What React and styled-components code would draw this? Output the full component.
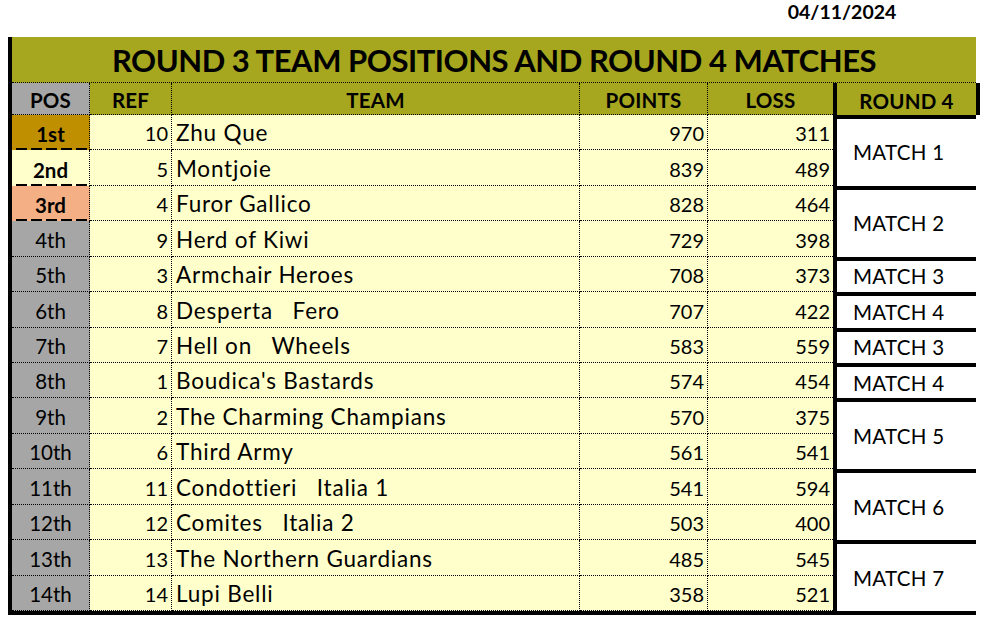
import React from 'react';
import styled, { createGlobalStyle, css } from 'styled-components';

const Global = createGlobalStyle`
  html, body { margin: 0; padding: 0; background: #ffffff; }
  body { font-family: Lato, "Liberation Sans", sans-serif; color: #000; }
  * { box-sizing: border-box; }
`;

const COLS = '78px 82px 408px 128px 125px 143px';
const OLIVE = '#a6a61f';
const GRAY = '#a6a6a6';
const CREAM = '#ffffcc';

const Page = styled.div`
  padding-left: 8px;
  width: 987px;
`;

const DateBar = styled.div`
  display: grid;
  grid-template-columns: ${COLS};
  margin-left: 4px;
  width: 964px;
  height: 37px;
`;

const DateText = styled.div`
  grid-column: 5 / span 2;
  text-align: center;
  font-weight: 700;
  font-size: 19.5px;
  line-height: 24px;
`;

const Sheet = styled.div`
  width: 968px;
  border-left: 4px solid #000;
  border-bottom: 4px solid #000;
`;

const Title = styled.div`
  height: 46px;
  background: ${OLIVE};
  border-bottom: 1px dotted #000;
  display: flex;
  align-items: center;
  justify-content: center;
  font-weight: 700;
  font-size: 31px;
  letter-spacing: -0.45px;
  white-space: nowrap;
`;

const Grid = styled.div`
  display: grid;
  grid-template-columns: ${COLS};
  grid-template-rows: 32px repeat(14, 1fr);
  height: 528px;
`;

const dashLine = css`
  background-image: repeating-linear-gradient(
    90deg,
    #000 0 11px,
    transparent 11px 15px
  );
  background-size: 100% 2px;
  background-position: 4px 100%;
  background-repeat: no-repeat;
`;

const kinds = {
  pos: css`
    font-size: 20.5px;
    justify-content: center;
  `,
  num: css`
    font-size: 20px;
    justify-content: flex-end;
    padding-right: 3px;
  `,
  name: css`
    font-size: 22.5px;
    letter-spacing: 0.8px;
    justify-content: flex-start;
    padding-left: 4px;
    padding-bottom: 3px;
  `,
};

const Cell = styled.div`
  background-color: ${p => p.$bg || CREAM};
  border-bottom: ${p => (p.$dash ? 'none' : '1px dotted #000')};
  border-right: ${p => (p.$last ? 'none' : '1px dotted #000')};
  font-weight: ${p => (p.$bold ? 700 : 400)};
  display: flex;
  align-items: flex-end;
  padding-bottom: 4px;
  line-height: normal;
  white-space: pre;
  ${p => kinds[p.$kind]}
  ${p => p.$dash && dashLine}
`;

const HeadCell = styled.div`
  background-color: ${p => p.$bg || OLIVE};
  border-bottom: 1px dotted #000;
  border-right: ${p => (p.$last ? 'none' : '1px dotted #000')};
  font-size: 20.5px;
  letter-spacing: 0.2px;
  font-weight: 700;
  display: flex;
  align-items: flex-end;
  justify-content: center;
  padding-bottom: 2px;
`;

const RoundHead = styled(HeadCell)`
  border-left: 4px solid #000;
  border-right: 4px solid #000;
  margin-right: -4px;
  border-bottom: none;
`;

const MatchCell = styled.div`
  grid-column: 6;
  grid-row: ${p => p.$row + 1} / span ${p => p.$span};
  background: #ffffff;
  border-left: 4px solid #000;
  border-top: 4px solid #000;
  display: flex;
  align-items: center;
  padding-left: 16px;
  font-size: 20.5px;
  letter-spacing: 0.3px;
  font-weight: 400;
`;

const teams = [
  ['1st', 10, 'Zhu Que', 970, 311],
  ['2nd', 5, 'Montjoie', 839, 489],
  ['3rd', 4, 'Furor Gallico', 828, 464],
  ['4th', 9, 'Herd of Kiwi', 729, 398],
  ['5th', 3, 'Armchair Heroes', 708, 373],
  ['6th', 8, 'Desperta   Fero', 707, 422],
  ['7th', 7, 'Hell on   Wheels', 583, 559],
  ['8th', 1, "Boudica's Bastards", 574, 454],
  ['9th', 2, 'The Charming Champians', 570, 375],
  ['10th', 6, 'Third Army', 561, 541],
  ['11th', 11, 'Condottieri   Italia 1', 541, 594],
  ['12th', 12, 'Comites   Italia 2', 503, 400],
  ['13th', 13, 'The Northern Guardians', 485, 545],
  ['14th', 14, 'Lupi Belli', 358, 521],
];

const matches = [
  [1, 2, 'MATCH 1'],
  [3, 2, 'MATCH 2'],
  [5, 1, 'MATCH 3'],
  [6, 1, 'MATCH 4'],
  [7, 1, 'MATCH 3'],
  [8, 1, 'MATCH 4'],
  [9, 2, 'MATCH 5'],
  [11, 2, 'MATCH 6'],
  [13, 2, 'MATCH 7'],
];

const posBg = ['#bf8f00', CREAM, '#f4b084'];

export default function App() {
  return (
    <Page>
      <Global />
      <DateBar>
        <DateText>04/11/2024</DateText>
      </DateBar>
      <Sheet>
        <Title>ROUND 3 TEAM POSITIONS AND ROUND 4 MATCHES</Title>
        <Grid>
          <HeadCell $bg={GRAY}>POS</HeadCell>
          <HeadCell>REF</HeadCell>
          <HeadCell>TEAM</HeadCell>
          <HeadCell>POINTS</HeadCell>
          <HeadCell $last>LOSS</HeadCell>
          <RoundHead>ROUND 4</RoundHead>
          {matches.map(([row, span, label], i) => (
            <MatchCell key={'m' + i} $row={row} $span={span}>
              {label}
            </MatchCell>
          ))}
          {teams.map(([pos, ref, name, pts, loss], i) => (
            <React.Fragment key={pos}>
              <Cell
                $kind="pos"
                $bg={i < 3 ? posBg[i] : GRAY}
                $bold={i < 3}
                $dash={i < 3}
              >
                {pos}
              </Cell>
              <Cell $kind="num">{ref}</Cell>
              <Cell $kind="name">{name}</Cell>
              <Cell $kind="num">{pts}</Cell>
              <Cell $kind="num" $last>
                {loss}
              </Cell>
            </React.Fragment>
          ))}
        </Grid>
      </Sheet>
    </Page>
  );
}
